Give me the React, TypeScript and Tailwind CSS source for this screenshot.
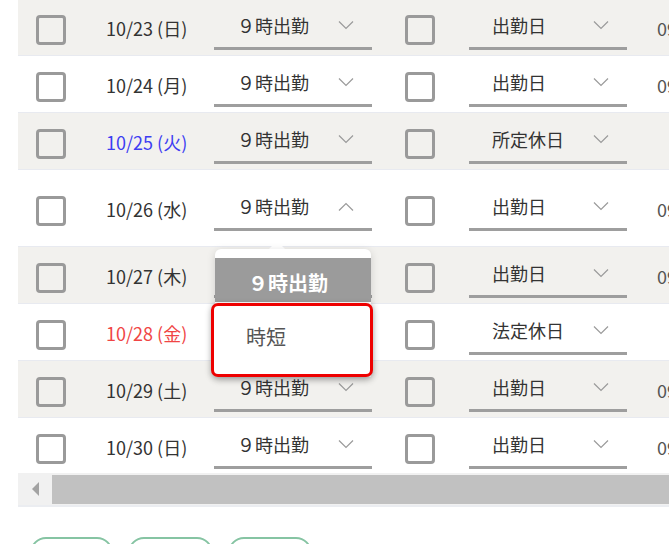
import React from "react";

type Row = {
  date: string;
  tone?: "blue" | "red";
  shift: string;
  day: string;
  time: boolean;
  open?: boolean;
};

const rows: Row[] = [
  { date: "10/23 (日)", shift: "９時出勤", day: "出勤日", time: true },
  { date: "10/24 (月)", shift: "９時出勤", day: "出勤日", time: true },
  { date: "10/25 (火)", tone: "blue", shift: "９時出勤", day: "所定休日", time: false },
  { date: "10/26 (水)", shift: "９時出勤", day: "出勤日", time: true, open: true },
  { date: "10/27 (木)", shift: "９時出勤", day: "出勤日", time: true },
  { date: "10/28 (金)", tone: "red", shift: "９時出勤", day: "法定休日", time: false },
  { date: "10/29 (土)", shift: "９時出勤", day: "出勤日", time: true },
  { date: "10/30 (日)", shift: "９時出勤", day: "出勤日", time: true },
];

const font = { fontFamily: '"Noto Sans CJK JP", "Noto Sans", sans-serif' };

const Chevron = ({ up }: { up?: boolean }) => (
  <svg width="16" height="9" viewBox="0 0 16 9" className="shrink-0">
    <path
      d={up ? "M1 8.5 L8 1.5 L15 8.5" : "M1 0.5 L8 7.5 L15 0.5"}
      fill="none"
      stroke="#9a9a9a"
      strokeWidth="1.2"
    />
  </svg>
);

const Checkbox = () => (
  <div className="w-[30px] h-[30px] shrink-0 rounded-[4px] border-[3px] border-[#9a9a9a]" />
);

const Select = ({ value, open, children }: { value: string; open?: boolean; children?: React.ReactNode }) => (
  <div className="relative w-[158px] h-[40px] shrink-0 flex items-center justify-between pl-[23px] pr-[18px] pb-[6px] border-b-[3px] border-[#9e9e9e]">
    <span className="text-[18px] text-[#333]">{value}</span>
    <Chevron up={open} />
    {children}
  </div>
);

// open list under the 10/26 shift select
const Popup = () => (
  <div className="absolute left-[1px] top-[calc(100%+13px)] w-[156px] z-10">
    <div className="ml-[54px] w-0 h-0 border-x-[8px] border-x-transparent border-b-[8px] border-b-white" />
    <div className="bg-white rounded-t-[6px] pt-[9px] shadow-[0_2px_8px_rgba(0,0,0,0.15)]">
      <div className="h-[44px] bg-[#9b9b9b] flex items-center pl-[33px] pt-[6px] text-white font-bold text-[20px]">
        ９時出勤
      </div>
      <div className="-ml-[4px] -mr-[2px] mt-[1px] h-[74px] bg-white border-[3px] border-[#ee0000] rounded-[7px] flex items-center pl-[32px] pb-[6px] text-[20px] text-[#555] shadow-[0_2px_6px_rgba(0,0,0,0.3)]">
        時短
      </div>
    </div>
  </div>
);

export default function App() {
  return (
    <div className="w-[669px] h-[544px] overflow-hidden bg-white" style={font}>
      <div className="ml-[18px] w-[760px] -mt-[1px]">
        {rows.map((r, i) => (
          <div
            key={r.date}
            className={`flex items-center pt-[6px] border-b border-[#e8eaf0] ${r.open ? "h-[77px]" : "h-[57px]"} ${i % 2 === 0 ? "bg-[#f2f1ee]" : "bg-white"}`}
          >
            <div className="ml-[18px]">
              <Checkbox />
            </div>
            <div
              className={`ml-[40px] w-[108px] shrink-0 pb-[4px] text-[18px] ${r.tone === "blue" ? "text-[#3d3df2]" : r.tone === "red" ? "text-[#f04545]" : "text-[#333]"}`}
            >
              {r.date}
            </div>
            <Select value={r.shift} open={r.open}>
              {r.open && <Popup />}
            </Select>
            <div className="ml-[33px]">
              <Checkbox />
            </div>
            <div className="ml-[34px]">
              <Select value={r.day} />
            </div>
            {r.time && <div className="ml-[30px] pb-[4px] text-[18px] text-[#555]">09:00</div>}
          </div>
        ))}
        <div className="flex h-[32px] -mt-[2px] bg-[#f1f1f1]">
          <div className="w-[34px] flex items-center justify-center">
            <div className="w-0 h-0 border-y-[7px] border-y-transparent border-r-[7px] border-r-[#a3a3a3]" />
          </div>
          <div className="flex-1 mt-[2px] mb-[1px] bg-[#c1c1c1]" />
        </div>
        <div className="h-[2px] bg-[#ebedf1]" />
      </div>
      <div className="flex gap-[15px] ml-[30px] mt-[30px]">
        <div className="w-[83px] h-[40px] rounded-[16px] border-2 border-[#86c4a3]" />
        <div className="w-[85px] h-[40px] rounded-[16px] border-2 border-[#86c4a3]" />
        <div className="w-[84px] h-[40px] rounded-[16px] border-2 border-[#86c4a3]" />
      </div>
    </div>
  );
}
